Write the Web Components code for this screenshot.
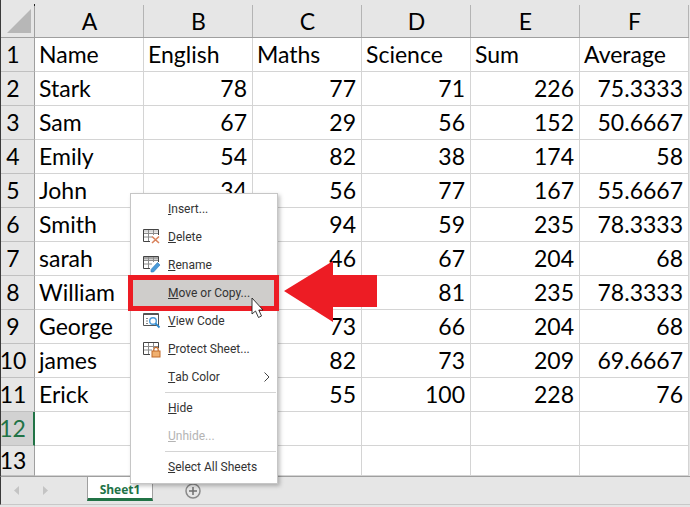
<!DOCTYPE html>
<html>
<head>
<meta charset="utf-8">
<style>
  html, body { margin: 0; height: 100%; background: #fff; overflow: hidden; }
  body { width: 690px; height: 507px; position: relative; font-family: "Lato", "Liberation Sans", sans-serif; }
</style>
</head>
<body>
<x-workbook>
  <x-sheet></x-sheet>
  <x-tabbar name="Sheet1"></x-tabbar>
  <x-context-menu>
    <x-menu-item><u>I</u>nsert...</x-menu-item>
    <x-menu-item icon="delete"><u>D</u>elete</x-menu-item>
    <x-menu-item icon="rename"><u>R</u>ename</x-menu-item>
    <x-menu-item active><u>M</u>ove or Copy...</x-menu-item>
    <x-menu-item icon="code"><u>V</u>iew Code</x-menu-item>
    <x-menu-item icon="protect"><u>P</u>rotect Sheet...</x-menu-item>
    <x-menu-item submenu><u>T</u>ab Color</x-menu-item>
    <x-menu-sep></x-menu-sep>
    <x-menu-item><u>H</u>ide</x-menu-item>
    <x-menu-item disabled><u>U</u>nhide...</x-menu-item>
    <x-menu-sep></x-menu-sep>
    <x-menu-item><u>S</u>elect All Sheets</x-menu-item>
  </x-context-menu>
  <x-callout></x-callout>
</x-workbook>

<script>
const COLS = ['A', 'B', 'C', 'D', 'E', 'F'];
// null = cell that lies under the menu or the arrow in the picture
const ROWS = [
  ['Name', 'English', 'Maths', 'Science', 'Sum', 'Average'],
  ['Stark', 78, 77, 71, 226, 75.3333],
  ['Sam', 67, 29, 56, 152, 50.6667],
  ['Emily', 54, 82, 38, 174, 58],
  ['John', 34, 56, 77, 167, 55.6667],
  ['Smith', null, 94, 59, 235, 78.3333],
  ['sarah', null, 46, 67, 204, 68],
  ['William', null, null, 81, 235, 78.3333],
  ['George', null, 73, 66, 204, 68],
  ['james', null, 82, 73, 209, 69.6667],
  ['Erick', null, 55, 100, 228, 76],
  [], []
];

class XWorkbook extends HTMLElement {
  constructor() {
    super();
    this.attachShadow({ mode: 'open' });
    this.shadowRoot.innerHTML = `
      <style>
        :host { display: flex; flex-direction: column; width: 690px; height: 507px; background: #e6e6e6; }
      </style>
      <slot></slot>
    `;
  }
}

class XSheet extends HTMLElement {
  constructor() {
    super();
    this.attachShadow({ mode: 'open' });
  }

  connectedCallback() {
    let cells = `<div class="corner"><svg width="34" height="38" viewBox="0 0 34 38">
      <path d="M30 9V33H6Z" fill="#b7b7b7"/>
      <path d="M33.500 5V37M0 37.500H34" stroke="#9f9f9f" fill="none"/>
      <rect x="33" y="4" width="1" height="2" fill="#222"/></svg></div>`;
    COLS.forEach(c => { cells += `<div class="head col">${c}</div>`; });
    ROWS.forEach((row, i) => {
      const sel = i === 11 ? ' sel' : '';
      cells += `<div class="head row${sel}">${i + 1}</div>`;
      COLS.forEach((c, j) => {
        const v = row[j];
        const num = typeof v === 'number' ? ' num' : '';
        cells += `<div class="cell${num}">${v === undefined || v === null ? '' : v}</div>`;
      });
    });
    this.shadowRoot.innerHTML = `
      <style>
        :host {
          display: grid;
          flex: none;
          height: 477px;
          box-sizing: border-box;
          border-left: 1px solid #3a3a3a;
          border-bottom: 1px solid #9f9f9f;
          padding-right: 1px;
          grid-template-columns: 34px repeat(6, 109px);
          grid-template-rows: 38px repeat(12, 34px) 1fr;
          font-family: "Lato", "Liberation Sans", sans-serif;
          font-size: 23px;
          color: #000;
          background: #e6e6e6;
        }
        .corner svg { display: block; }
        .head {
          background-color: #e6e6e6;
          display: flex; align-items: center; justify-content: center;
          box-sizing: border-box;
        }
        .col {
          border-bottom: 1px solid #9f9f9f;
          padding-top: 5px;
          background-image: linear-gradient(#b4b4b4, #b4b4b4);
          background-repeat: no-repeat;
          background-position: right bottom;
          background-size: 1px calc(100% - 5px);
        }
        .row { border-right: 1px solid #9f9f9f; border-bottom: 1px solid #c0c0c0; padding: 0 9px 1px 0; }
        .sel { background-color: #d2d2d2; color: #217346; border-right: 2px solid #217346; }
        .cell {
          box-sizing: border-box;
          background: #fff;
          border-right: 1px solid #d4d4d4;
          border-bottom: 1px solid #d4d4d4;
          padding: 0 4px 1px;
          display: flex; align-items: center;
          white-space: nowrap;
        }
        .num { justify-content: flex-end; padding-right: 5px; }
      </style>
      ${cells}
    `;
  }
}

class XTabbar extends HTMLElement {
  constructor() {
    super();
    this.attachShadow({ mode: 'open' });
  }

  connectedCallback() {
    const name = this.getAttribute('name') || 'Sheet1';
    this.shadowRoot.innerHTML = `
      <style>
        :host {
          display: flex;
          flex: none;
          height: 27px;
          background: #e6e6e6;
          border-left: 1px solid #3a3a3a;
          border-bottom: 1px solid #c8c8c8;
          font-family: "Open Sans", "Liberation Sans", sans-serif;
          align-items: stretch;
        }
        .nav { width: 86px; display: flex; align-items: center; padding-left: 13px; gap: 22px; box-sizing: border-box; }
        .tab {
          width: 66px; box-sizing: border-box;
          margin-bottom: 3px;
          padding-top: 3px;
          background: #fff;
          border-left: 1px solid #9f9f9f;
          border-right: 1px solid #9f9f9f;
          border-bottom: 3px solid #217346;
          color: #217346; font-size: 12px; font-weight: 700;
          display: flex; align-items: center; justify-content: center;
        }
        .add { margin-left: 32px; display: flex; align-items: center; }
        svg { display: block; }
      </style>
      <div class="nav">
        <svg width="6" height="10" viewBox="0 0 6 10"><path d="M5 0V9L0 4.500Z" fill="#c4c4c4"/></svg>
        <svg width="6" height="10" viewBox="0 0 6 10"><path d="M1 0V9L6 4.500Z" fill="#c4c4c4"/></svg>
      </div>
      <div class="tab">${name}</div>
      <div class="add">
        <svg width="16" height="16" viewBox="0 0 16 16"><circle cx="8" cy="8" r="7" fill="none" stroke="#8a8a8a" stroke-width="1.500"/><path d="M8 4V12M4 8H12" stroke="#6f6f6f" stroke-width="1.500"/></svg>
      </div>
    `;
  }
}

class XContextMenu extends HTMLElement {
  constructor() {
    super();
    this.attachShadow({ mode: 'open' });
    this.shadowRoot.innerHTML = `
      <style>
        :host {
          display: flex;
          flex-direction: column;
          position: absolute;
          left: 130px; top: 193px;
          width: 148px;
          height: 291px;
          box-sizing: border-box;
          padding: 1px 1px;
          background: #fff;
          border: 1px solid #c6c6c6;
          box-shadow: 2px 2px 4px rgba(0,0,0,.25);
          font-family: "Roboto", "Open Sans", sans-serif;
          font-size: 12px;
          color: #333;
        }
      </style>
      <slot></slot>
    `;
  }
}

// the sheet grid every icon starts from: 16 wide, notched at the bottom right
const GRID = (top, band) => `
  <rect x=".5" y="${top + .5}" width="15" height="3" fill="${band}"/>
  <path d="M.5 ${top + 4.500}H15.500M.5 ${top + 8}H9M5.500 ${top + .5}V${top + 12}M10.500 ${top + .5}V${top + 6}" stroke="#8c8c8c" fill="none"/>
  <path d="M.5 ${top + 12.500}V${top + .5}H15.500V${top + 6}M.5 ${top + 12.500}H7" stroke="#444" fill="none"/>`;
const ICONS = {
  delete: `<svg width="18" height="18" viewBox="0 0 18 18">${GRID(1, '#d8d8d8')}<path d="M9 8.500L16 15M16 8.500L9 15" stroke="#d9825b" stroke-width="1.600"/></svg>`,
  rename: `<svg width="18" height="18" viewBox="0 0 18 18">${GRID(0, '#a6a6a6')}<path d="M8 13.500L14.500 6.500L17 9L10.500 16H8Z" fill="#4a9ad8" stroke="#2b79b9" stroke-width=".6"/></svg>`,
  code: `<svg width="18" height="18" viewBox="0 0 18 18"><path d="M.5 1.500H15.500V13.500H.5Z" fill="#fff" stroke="#555"/><path d="M1 2.500H15" stroke="#555"/><path d="M3 6.500H5M3 9H5M3 11.500H5" stroke="#888"/><circle cx="10" cy="9" r="3.300" fill="#fff" stroke="#4a9ad8" stroke-width="1.400"/><path d="M12.500 11.500L16.500 15.500" stroke="#2b86c9" stroke-width="1.800"/></svg>`,
  protect: `<svg width="18" height="18" viewBox="0 0 18 18">${GRID(2, '#fff')}<rect x="9" y="11" width="8" height="6" fill="#f0b070" stroke="#c06a2a"/><path d="M10.800 11V9.500A2.200 2.200 0 0 1 15.200 9.500V11" fill="none" stroke="#c06a2a" stroke-width="1.200"/></svg>`
};

class XMenuItem extends HTMLElement {
  constructor() {
    super();
    this.attachShadow({ mode: 'open' });
  }

  connectedCallback() {
    const icon = ICONS[this.getAttribute('icon')] || '';
    const arrow = this.hasAttribute('submenu')
      ? '<svg class="more" width="6" height="10" viewBox="0 0 6 10"><path d="M.5 .5L5 5L.5 9.500" fill="none" stroke="#444"/></svg>'
      : '';
    this.shadowRoot.innerHTML = `
      <style>
        :host {
          display: flex;
          align-items: center;
          height: 28px;
          flex: none;
          padding-left: 11px;
          box-sizing: border-box;
          white-space: nowrap;
        }
        :host([active]) { background: #cfcdcb; }
        :host([disabled]) { color: #b4b4b4; }
        .ico { width: 25px; display: flex; flex: none; }
        .more { margin-left: auto; margin-right: 6px; }
        svg { display: block; }
      </style>
      <span class="ico">${icon}</span><slot></slot>${arrow}
    `;
  }
}

class XMenuSep extends HTMLElement {
  constructor() {
    super();
    this.attachShadow({ mode: 'open' });
    this.shadowRoot.innerHTML = `
      <style>
        :host { display: block; flex: none; height: 1px; margin: 1px 0 1px 33px; background: #d4d4d4; }
      </style>
    `;
  }
}

class XCallout extends HTMLElement {
  constructor() {
    super();
    this.attachShadow({ mode: 'open' });
    this.shadowRoot.innerHTML = `
      <style>
        :host { display: block; position: absolute; left: 128px; top: 260px; width: 252px; height: 64px; pointer-events: none; }
        .box { position: absolute; left: 0; top: 15px; width: 151px; height: 36px; box-sizing: border-box; border: 5px solid #ed1c24; }
        svg { position: absolute; left: 0; top: 0; }
      </style>
      <div class="box"></div>
      <svg width="252" height="64" viewBox="0 0 252 64">
        <path d="M156 31L205 1V15H249V47H205V62Z" fill="#ed1c24"/>
        <path d="M124 38V54L127.500 51L130.500 57.500L133.500 56L130.800 50H135Z" fill="#fff" stroke="#222" stroke-width=".9"/>
      </svg>
    `;
  }
}

customElements.define('x-workbook', XWorkbook);
customElements.define('x-sheet', XSheet);
customElements.define('x-tabbar', XTabbar);
customElements.define('x-context-menu', XContextMenu);
customElements.define('x-menu-item', XMenuItem);
customElements.define('x-menu-sep', XMenuSep);
customElements.define('x-callout', XCallout);
</script>
</body>
</html>
